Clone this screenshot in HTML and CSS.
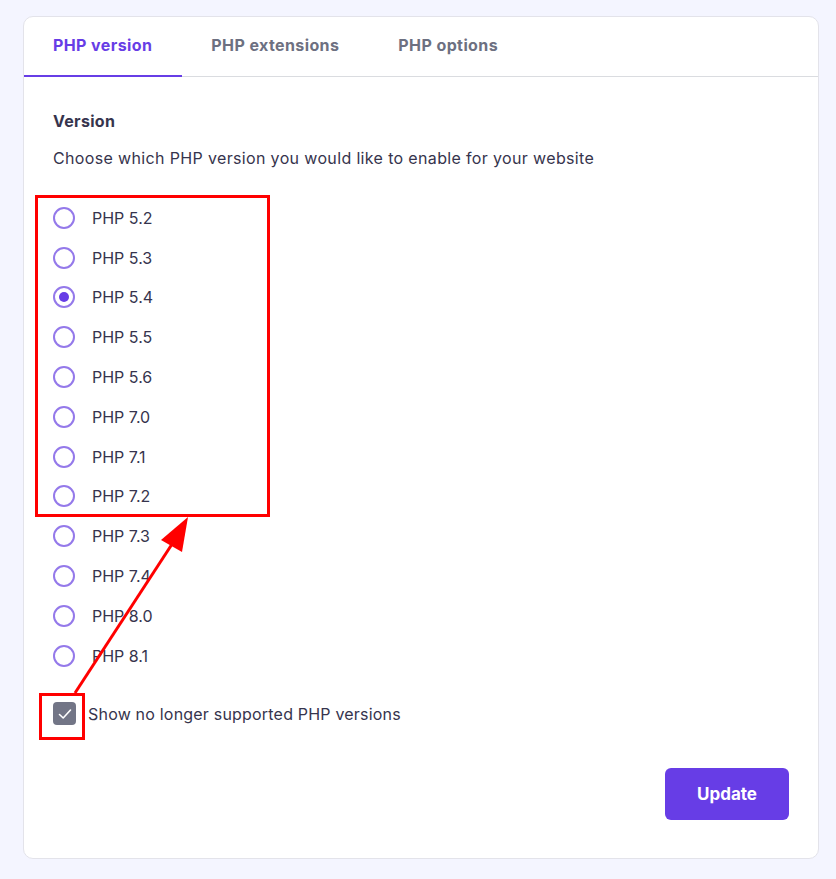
FILE: index.html
```html
<!DOCTYPE html>
<html>
<head>
	<title>PHP configuration</title>
	<meta charset="utf-8">
	<link rel="stylesheet" href="styles.css">
</head>
<body>
	<div class="card">
		<ul class="tabs">
			<li class="active">PHP version</li>
			<li>PHP extensions</li>
			<li>PHP options</li>
		</ul>
		<div class="content">
			<h3 class="title">Version</h3>
			<p class="desc">Choose which PHP version you would like to enable for your website</p>
			<ul class="versions">
				<li><span class="radio"></span>PHP 5.2</li>
				<li><span class="radio"></span>PHP 5.3</li>
				<li><span class="radio checked"></span>PHP 5.4</li>
				<li><span class="radio"></span>PHP 5.5</li>
				<li><span class="radio"></span>PHP 5.6</li>
				<li><span class="radio"></span>PHP 7.0</li>
				<li><span class="radio"></span>PHP 7.1</li>
				<li><span class="radio"></span>PHP 7.2</li>
				<li><span class="radio"></span>PHP 7.3</li>
				<li><span class="radio"></span>PHP 7.4</li>
				<li><span class="radio"></span>PHP 8.0</li>
				<li><span class="radio"></span>PHP 8.1</li>
			</ul>
			<label class="check-row">
				<span class="checkbox">
					<svg width="18" height="18" viewBox="0 0 18 18"><path d="M3.5 9.5 L7.2 13 L14.5 5" fill="none" stroke="#fff" stroke-width="1.6" stroke-linecap="round" stroke-linejoin="round"/></svg>
				</span>
				Show no longer supported PHP versions
			</label>
			<div class="actions">
				<button class="btn">Update</button>
			</div>
		</div>
	</div>

	<!-- red annotation -->
	<svg class="marks" width="836" height="879" viewBox="0 0 836 879">
		<rect x="36.5" y="196.5" width="232" height="319" fill="none" stroke="#f00" stroke-width="3"/>
		<rect x="40.5" y="694.5" width="43" height="44" fill="none" stroke="#f00" stroke-width="3"/>
		<line x1="75" y1="693" x2="176" y2="538" stroke="#f00" stroke-width="3"/>
		<polygon points="188,517 161,540 182,552" fill="#f00"/>
	</svg>
</body>
</html>
```

FILE: styles.css
```css
body{
	margin: 0;
	background: #f4f5ff;
	font-family: "Inter", "Liberation Sans", sans-serif;
	color: #36344d;
	position: relative;
}
.card{
	margin: 16px 0 0 23px;
	width: 794px;
	height: 841px;
	background: #fff;
	border: 1px solid #e3e3ea;
	border-radius: 10px;
	box-sizing: content-box;
}
.tabs{
	list-style: none;
	margin: 0;
	padding: 0;
	display: flex;
	border-bottom: 1px solid #dadce0;
	height: 59px;
}
.tabs li{
	padding: 0 30px 0 29px;
	line-height: 57px;
	font-size: 16px;
	font-weight: 700;
	letter-spacing: 0.4px;
	color: #6d7081;
	border-bottom: 2px solid transparent;
	margin-bottom: -1px;
}
.tabs li.active{
	color: #673de6;
	border-bottom-color: #673de6;
}
.content{
	padding: 32px 29px 0 29px;
}
.title{
	margin: 0;
	font-size: 16px;
	line-height: 24px;
	font-weight: 700;
	letter-spacing: 0.3px;
}
.desc{
	margin: 13px 0 0 0;
	font-size: 16px;
	line-height: 24px;
	letter-spacing: 0.35px;
}
.versions{
	list-style: none;
	margin: 28px 0 0 0;
	padding: 0;
}
.versions li{
	display: flex;
	align-items: center;
	height: 39.8px;
	font-size: 16px;
}
.radio{
	width: 18px;
	height: 18px;
	border: 2px solid #9479ea;
	border-radius: 50%;
	margin-right: 17px;
	display: flex;
	align-items: center;
	justify-content: center;
}
.radio.checked::after{
	content: "";
	width: 10px;
	height: 10px;
	border-radius: 50%;
	background: #673de6;
}
.check-row{
	display: flex;
	align-items: center;
	margin-top: 26px;
	font-size: 16px;
	height: 24px;
	letter-spacing: 0.2px;
}
.checkbox{
	width: 23px;
	height: 23px;
	border-radius: 4px;
	background: #727586;
	margin-right: 12px;
	display: flex;
	align-items: center;
	justify-content: center;
}
.actions{
	display: flex;
	justify-content: flex-end;
	margin-top: 42px;
	padding-right: 0;
}
.btn{
	width: 124px;
	height: 52px;
	border: none;
	border-radius: 6px;
	background: #673de6;
	color: #fff;
	font-family: inherit;
	font-size: 17px;
	font-weight: 700;
}
.marks{
	position: absolute;
	left: 0;
	top: 0;
	pointer-events: none;
}
```
